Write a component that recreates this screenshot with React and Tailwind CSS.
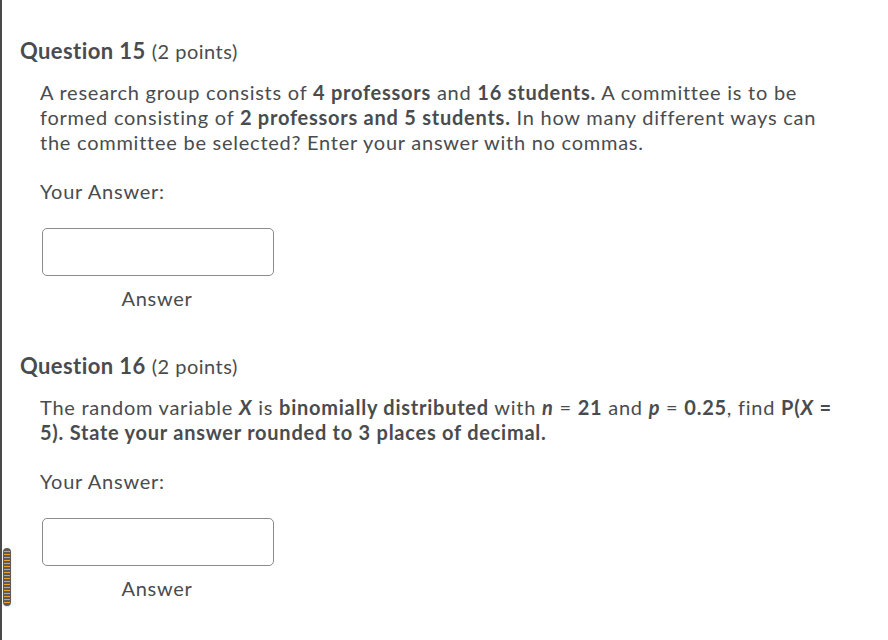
import React from "react";

const Question = ({ number, children }) => (
  <div>
    <h2 className="leading-[25px] text-[#494c4e]">
      <span className="font-bold text-[22px] tracking-[0.4px]">Question {number}</span>{" "}
      <span className="ml-[2px] text-[20px] tracking-[0.5px]">(2 points)</span>
    </h2>
    <div className="pl-5 text-[20px] tracking-[0.75px] leading-[25px] text-[#494c4e]">
      <p className="mt-[15px] max-w-[800px]">{children}</p>
      <p className="mt-6">Your Answer:</p>
      <div className="mt-[24px] w-[234px] flex flex-col items-center">
        <input
          type="text"
          className="ml-[2px] w-[232px] h-[48px] rounded-[5px] border border-[#8a8b8c] bg-white outline-none"
        />
        <span className="mt-[10px]">Answer</span>
      </div>
    </div>
  </div>
);

export default function App() {
  return (
    <div
      className="relative w-[888px] h-[640px] bg-white border-l-2 border-[#4a4a4a] overflow-hidden"
      style={{ fontFamily: "Lato, 'Open Sans', sans-serif" }}
    >
      <div className="pl-[18px] pt-[38px] flex flex-col gap-[42px]">
        <Question number={15}>
          A research group consists of <b>4 professors</b> and <b>16 students.</b> A committee is to be
          formed consisting of <b>2 professors and 5 students.</b> In how many different ways can
          the committee be selected? Enter your answer with no commas.
        </Question>
        <Question number={16}>
          The random variable <b><i>X</i></b> is <b>binomially distributed</b> with <b><i>n</i></b> = <b>21</b> and{" "}
          <b><i>p</i></b> = <b>0.25</b>, find <b>P(<i>X</i> = 5). State your answer rounded to 3 places of decimal.</b>
        </Question>
      </div>
      <div className="absolute left-[1px] top-[548px] w-[8px] h-[58px] rounded-full bg-[#5b5b5b] py-[3px] px-[1px] shadow">
        <div className="w-full h-full bg-[repeating-linear-gradient(to_bottom,#f0a030_0px,#f0a030_1px,#5b5b5b_1px,#5b5b5b_3px)]" />
      </div>
    </div>
  );
}
